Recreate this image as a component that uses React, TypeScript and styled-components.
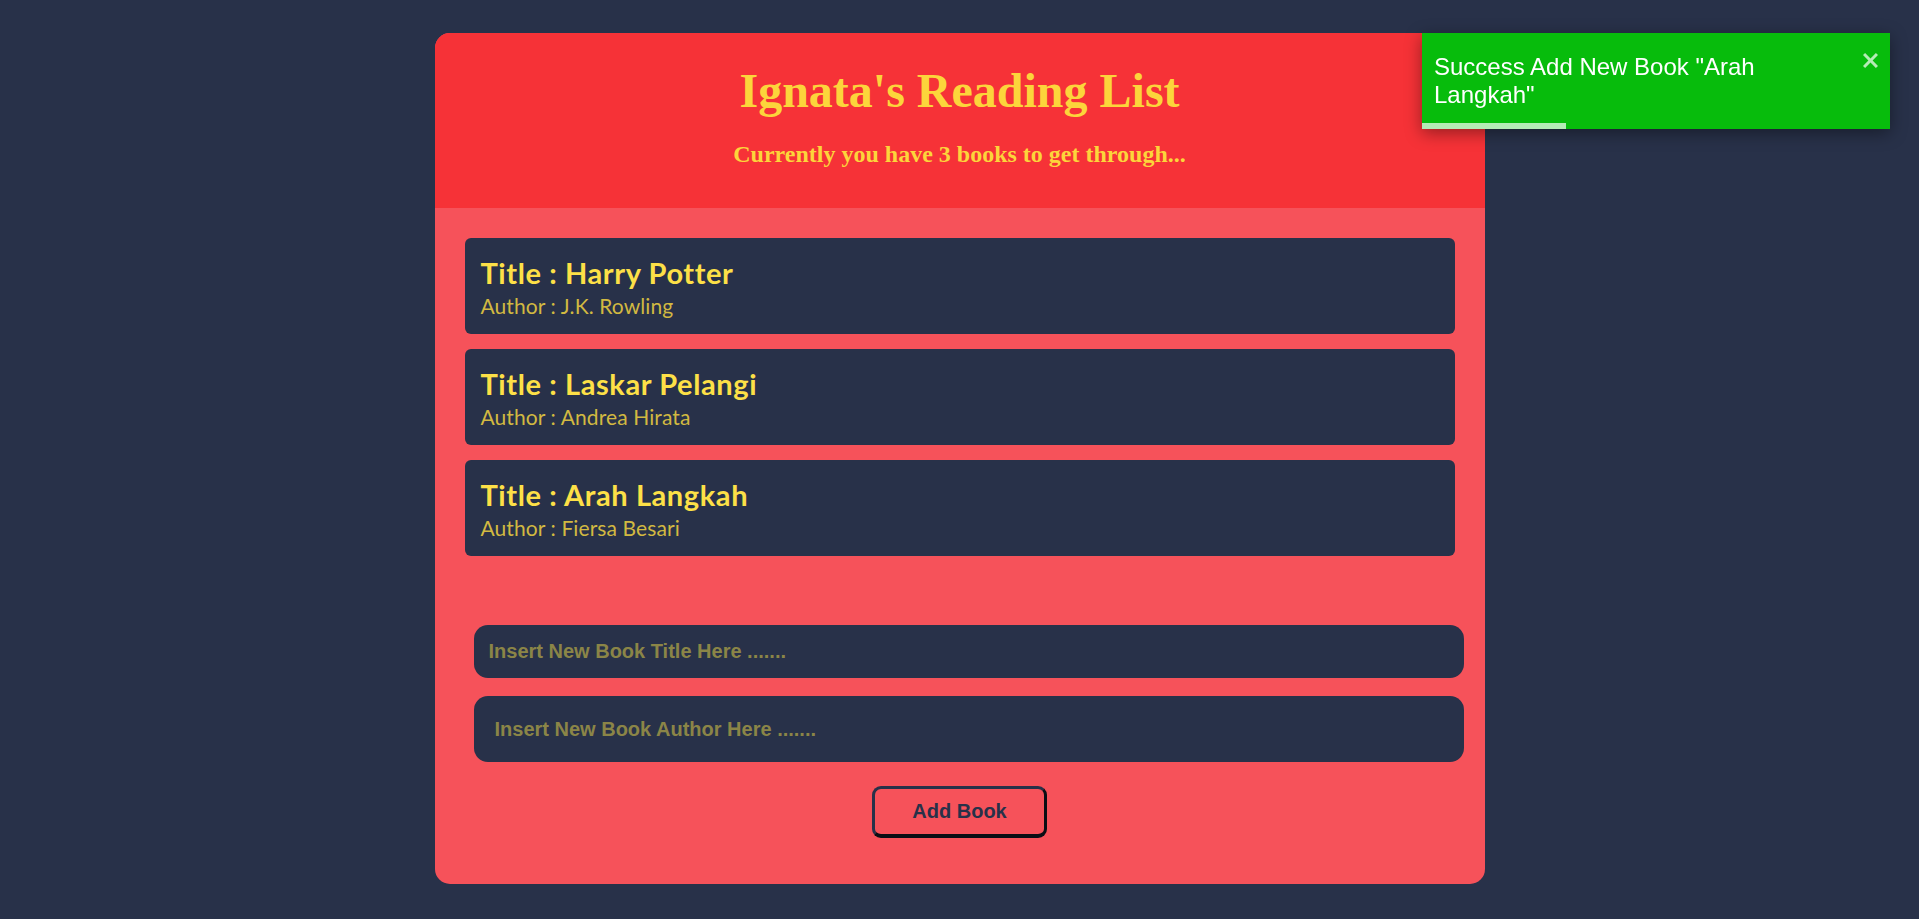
import React from "react";
import styled, { createGlobalStyle } from "styled-components";

const GlobalStyle = createGlobalStyle`
  html, body {
    margin: 0;
    padding: 0;
    background: #283149;
  }
  body {
    font-family: "Liberation Serif", serif;
  }
  * { box-sizing: border-box; }
`;

const Page = styled.div`
  min-height: 100vh;
  display: flex;
  justify-content: center;
  align-items: flex-start;
  padding-top: 33px;
`;

const Card = styled.main`
  width: 1050px;
  border-radius: 15px;
  overflow: hidden;
  background: #f6525a;
`;

const Header = styled.header`
  background: #f63237;
  padding: 30px 0 40px;
  text-align: center;
  color: #fcd53b;
`;

const Title = styled.h1`
  margin: 0;
  font: 700 48px/56px "Liberation Serif", serif;
`;

const Subtitle = styled.h2`
  margin: 21px 0 0;
  font: 700 24px/28px "Liberation Serif", serif;
`;

const Body = styled.section`
  padding: 30px 30px 46px;
`;

const BookList = styled.ul`
  list-style: none;
  margin: 0;
  padding: 0;
  display: flex;
  flex-direction: column;
  gap: 15px;
`;

const BookItem = styled.li`
  height: 96px;
  background: #283149;
  border-radius: 6px;
  padding: 18px 16px 0;
`;

const BookTitle = styled.div`
  font: 700 29px/34px "Lato", "Open Sans", sans-serif;
  letter-spacing: 0.6px;
  color: #fde047;
`;

const BookAuthor = styled.div`
  margin-top: 3px;
  font: 400 21px/26px "Lato", "Open Sans", sans-serif;
  letter-spacing: 0.1px;
  color: #d2b941;
`;

const Form = styled.form`
  margin-top: 69px;
  display: flex;
  flex-direction: column;
  align-items: center;
`;

const Input = styled.input<{ $height: number; $indent: number; $gap: number }>`
  align-self: flex-start;
  margin-left: 9px;
  margin-bottom: ${(p) => p.$gap}px;
  width: 990px;
  height: ${(p) => p.$height}px;
  padding: 0 0 0 ${(p) => p.$indent}px;
  border: none;
  outline: none;
  border-radius: 14px;
  background: #283149;
  font: 700 20px "Liberation Sans", Arial, sans-serif;
  color: #fde047;
  &::placeholder {
    color: #8b8547;
    opacity: 1;
  }
`;

const AddButton = styled.button`
  width: 175px;
  height: 52px;
  background: transparent;
  border-style: solid;
  border-width: 3px 3px 4px 3px;
  border-color: #283149 #0b0d14 #0b0d14 #283149;
  border-radius: 9px;
  font: 700 20px "Liberation Sans", Arial, sans-serif;
  color: #283149;
  cursor: pointer;
  padding: 0;
`;

const Toast = styled.div`
  position: fixed;
  top: 33px;
  right: 29px;
  width: 468px;
  height: 96px;
  background: #07bc0c;
  box-shadow: 0 4px 16px rgba(0, 0, 0, 0.4);
  display: flex;
  align-items: center;
  padding: 0 12px;
  color: #ffffff;
`;

const ToastBody = styled.div`
  flex: 1;
  max-width: 400px;
  font: 400 24px/27.7px "Liberation Sans", Arial, sans-serif;
`;

const CloseButton = styled.button`
  margin-left: auto;
  align-self: flex-start;
  margin-top: 20px;
  width: 15px;
  height: 15px;
  padding: 0;
  border: none;
  background: transparent;
  display: flex;
  cursor: pointer;
`;

const Progress = styled.div`
  position: absolute;
  left: 0;
  bottom: 0;
  height: 6px;
  background: rgba(255, 255, 255, 0.7);
`;

const books = [
  { title: "Harry Potter", author: "J.K. Rowling" },
  { title: "Laskar Pelangi", author: "Andrea Hirata" },
  { title: "Arah Langkah", author: "Fiersa Besari" },
];

export default function App() {
  return (
    <>
      <GlobalStyle />
      <Page>
        <Card>
          <Header>
            <Title>Ignata's Reading List</Title>
            <Subtitle>Currently you have {books.length} books to get through...</Subtitle>
          </Header>
          <Body>
            <BookList>
              {books.map((b) => (
                <BookItem key={b.title}>
                  <BookTitle>Title : {b.title}</BookTitle>
                  <BookAuthor>Author : {b.author}</BookAuthor>
                </BookItem>
              ))}
            </BookList>
            <Form onSubmit={(e) => e.preventDefault()}>
              <Input $height={53} $indent={15} $gap={18} placeholder="Insert New Book Title Here ......." />
              <Input $height={66} $indent={21} $gap={24} placeholder="Insert New Book Author Here ......." />
              <AddButton type="submit">Add Book</AddButton>
            </Form>
          </Body>
        </Card>
      </Page>
      <Toast role="alert">
        <ToastBody>Success Add New Book "Arah Langkah"</ToastBody>
        <CloseButton aria-label="close">
          <svg width="15" height="15" viewBox="1 3 10.46 10.46">
            <path
              fill="rgba(255,255,255,0.7)"
              d="M7.71 8.23l3.75 3.75-1.48 1.48-3.75-3.75-3.75 3.75L1 11.98l3.75-3.75L1 4.48 2.48 3l3.75 3.75L9.98 3l1.48 1.48-3.75 3.75z"
            />
          </svg>
        </CloseButton>
        <Progress style={{ width: "144px" }} />
      </Toast>
    </>
  );
}
